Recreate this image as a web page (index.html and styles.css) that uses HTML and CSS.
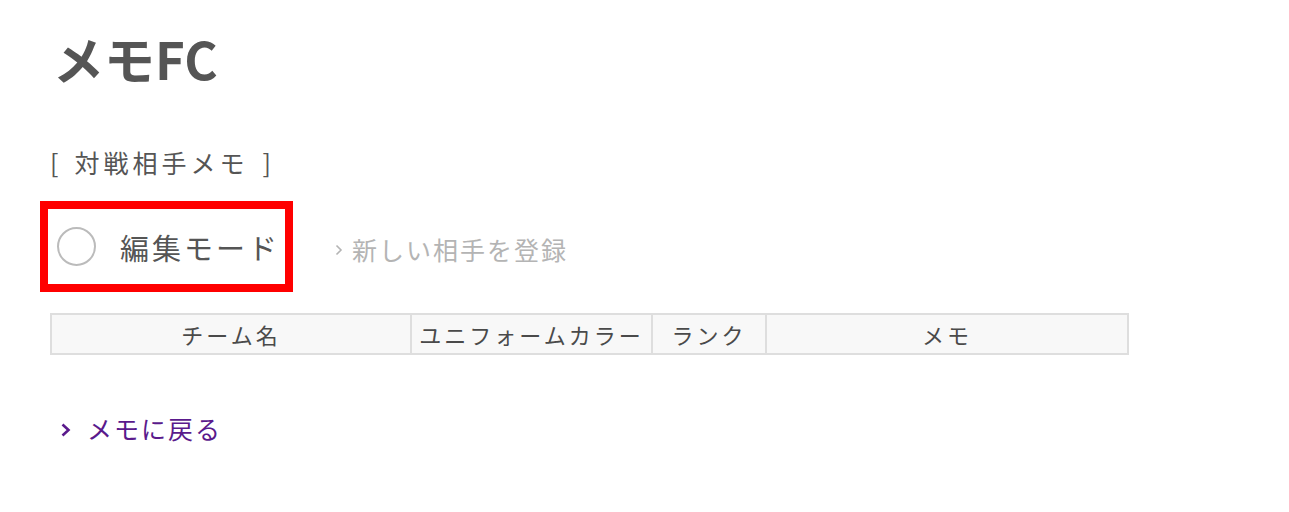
FILE: index.html
```html
<!DOCTYPE html>
<html lang="ja">
<head>
<meta charset="utf-8">
<title>メモFC</title>
<link rel="stylesheet" href="styles.css">
</head>
<body>
<div class="page">
  <h1 class="title">メモFC</h1>
  <h2 class="section"><span class="br">[</span>対戦相手メモ<span class="br br-r">]</span></h2>
  <div class="toolbar">
    <label class="edit-mode">
      <span class="radio"></span>
      <span class="edit-label">編集モード</span>
    </label>
    <a class="new-link" href="#"><svg class="chev chev-sm" viewBox="0 0 8 12" width="8" height="12"><path d="M1.5 1.5 L6 6 L1.5 10.5" fill="none" stroke="currentColor" stroke-width="1.6"/></svg>新しい相手を登録</a>
  </div>
  <table class="opp-table">
    <thead>
      <tr>
        <th class="c-name">チーム名</th>
        <th class="c-color">ユニフォームカラー</th>
        <th class="c-rank">ランク</th>
        <th class="c-memo">メモ</th>
      </tr>
    </thead>
  </table>
  <a class="back-link" href="#"><svg class="chev chev-lg" viewBox="0 0 10 14" width="10" height="14"><path d="M1.5 1.5 L7.5 7 L1.5 12.5" fill="none" stroke="currentColor" stroke-width="2.6"/></svg>メモに戻る</a>
</div>
</body>
</html>
```
FILE: styles.css
```css
html, body {
  margin: 0;
  padding: 0;
  background: #fff;
}
body {
  font-family: "Noto Sans CJK JP", "Noto Sans", sans-serif;
  color: #555;
}
.page {
  padding: 22px 0 0 50px;
}
.title {
  margin: 0 0 0 3px;
  font-size: 51px;
  line-height: 72px;
  font-weight: 700;
  color: #555;
  letter-spacing: 0;
}
.section {
  margin: 50px 0 0 0;
  font-size: 25px;
  line-height: 36px;
  font-weight: 400;
  color: #555;
  letter-spacing: 4px;
}
.br {
  margin-right: 12px;
}
.br-r {
  margin-right: 0;
  margin-left: 14px;
}
.toolbar {
  margin-top: 21px;
  display: flex;
  align-items: center;
  margin-left: -10px;
}
.edit-mode {
  display: flex;
  align-items: center;
  box-sizing: border-box;
  border: 8px solid #f00;
  width: 253px;
  height: 91px;
  padding-left: 9px;
}
.radio {
  width: 39px;
  height: 39px;
  border: 2px solid #bbb;
  border-radius: 50%;
  box-sizing: border-box;
  flex: none;
}
.edit-label {
  margin-left: 24px;
  font-size: 29px;
  letter-spacing: 3px;
  color: #555;
}
.new-link {
  display: flex;
  align-items: center;
  margin-left: 42px;
  font-size: 25px;
  letter-spacing: 2px;
  color: #b4b4b4;
  text-decoration: none;
  margin-top: 4px;
}
.chev {
  display: block;
  flex: none;
}
.chev-sm {
  margin-right: 9px;
  margin-top: 2px;
}
.opp-table {
  margin-top: 21px;
  width: 1079px;
  border-collapse: collapse;
  table-layout: fixed;
}
.opp-table th {
  background: #f8f8f8;
  border: 2px solid #dedede;
  height: 38px;
  padding: 0;
  font-size: 22px;
  font-weight: 400;
  color: #4a4a4a;
  letter-spacing: 3px;
  text-align: center;
  white-space: nowrap;
}
.c-name { width: 358px; }
.c-color { width: 239px; }
.c-rank { width: 112px; }
.c-memo { width: auto; }
.back-link {
  display: inline-flex;
  align-items: center;
  margin-top: 55px;
  margin-left: 11px;
  font-size: 25px;
  letter-spacing: 2px;
  color: #5a1a8c;
  text-decoration: none;
}
.chev-lg {
  margin-right: 16px;
  margin-top: 3px;
}
```
